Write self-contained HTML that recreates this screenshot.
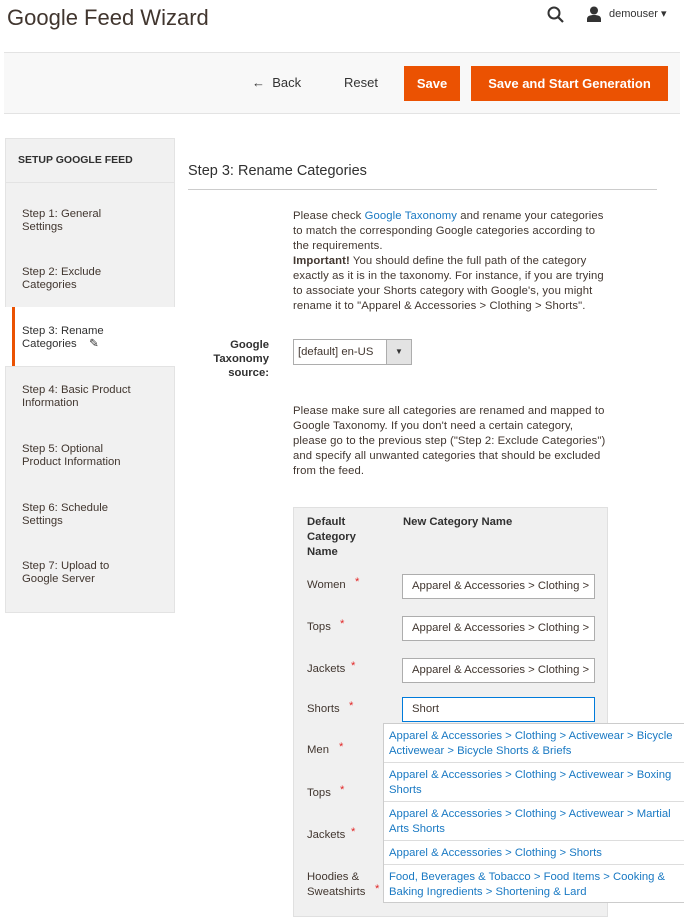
<!DOCTYPE html>
<html><head><meta charset="utf-8"><style>
*{margin:0;padding:0;box-sizing:border-box}
body{width:684px;height:909px;overflow:hidden;background:#fff;font-family:"Liberation Sans",sans-serif;color:#41362f;font-size:11px;position:relative}
.a{position:absolute}
.btn{position:absolute;background:#eb5202;color:#fff;font-weight:bold;font-size:13px;text-align:center;line-height:35px;top:66px;height:35px}
.st{position:absolute;left:22px;font-size:11.3px;line-height:13px;color:#41362f}
.p{position:absolute;left:293px;white-space:nowrap;font-size:11.3px;line-height:15px;color:#41362f;letter-spacing:0.1px}
.lb{position:absolute;left:307px;font-size:11.3px;color:#41362f}
.lb i{color:#e22626;font-style:normal;position:absolute;top:-3px}
.in{position:absolute;left:402px;width:193px;height:25px;border:1px solid #adadad;background:#fff;font-size:11.3px;line-height:23px;padding-left:9px;white-space:nowrap;overflow:hidden}
.dd{position:absolute;left:383px;top:723px;width:301px;height:180px;background:#fff;border:1px solid #ccc;border-right:none}
.di{padding:5px 5px 3px 5px;border-bottom:1px solid #ddd;color:#1979c3;font-size:11.3px;line-height:15px;white-space:nowrap}
</style></head><body>
<div class="a" style="left:7px;top:5px;font-size:22px;color:#41362f">Google Feed Wizard</div>
<svg class="a" style="left:547px;top:6px" width="18" height="18" viewBox="0 0 18 18"><circle cx="7" cy="7" r="5.5" fill="none" stroke="#333" stroke-width="2"/><path d="M11 11l5 5" stroke="#333" stroke-width="2.2"/></svg>
<svg class="a" style="left:587px;top:6px" width="14" height="16" viewBox="0 0 14 16"><circle cx="7" cy="4.5" r="4" fill="#333"/><path d="M0 16v-3c0-3 3-4 7-4s7 1 7 4v3z" fill="#333"/></svg>
<div class="a" style="left:609px;top:7px;font-size:11px;color:#333">demouser ▾</div>
<div class="a" style="left:4px;top:52px;width:676px;height:62px;background:#f8f8f8;border-top:1px solid #e3e3e3;border-bottom:1px solid #e3e3e3"></div>
<div class="a" style="left:252px;top:75px;font-size:13px;color:#333">←&nbsp;&nbsp;Back</div>
<div class="a" style="left:344px;top:75px;font-size:13px;color:#333">Reset</div>
<div class="btn" style="left:404px;width:56px">Save</div>
<div class="btn" style="left:471px;width:197px">Save and Start Generation</div>

<div class="a" style="left:5px;top:138px;width:170px;height:475px;background:#f1f1f1;border:1px solid #e3e3e3"></div>
<div class="a" style="left:5px;top:182px;width:170px;border-top:1px solid #e3e3e3"></div>
<div class="a" style="left:18px;top:154px;font-size:10.5px;font-weight:bold;color:#303030">SETUP GOOGLE FEED</div>
<div class="st" style="top:208px">Step 1: General<br>Settings</div>
<div class="st" style="top:266px">Step 2: Exclude<br>Categories</div>
<div class="a" style="left:5px;top:307px;width:170px;height:59px;background:#fff"></div>
<div class="a" style="left:12px;top:307px;width:3px;height:59px;background:#eb5202"></div>
<div class="st" style="top:325px;color:#303030">Step 3: Rename<br>Categories &nbsp;&nbsp;&nbsp;✎</div>
<div class="a" style="left:5px;top:366px;width:170px;border-top:1px solid #e3e3e3"></div>
<div class="st" style="top:384px">Step 4: Basic Product<br>Information</div>
<div class="st" style="top:443px">Step 5: Optional<br>Product Information</div>
<div class="st" style="top:502px">Step 6: Schedule<br>Settings</div>
<div class="st" style="top:560px">Step 7: Upload to<br>Google Server</div>

<div class="a" style="left:188px;top:163px;font-size:14.5px;color:#303030">Step 3: Rename Categories</div>
<div class="a" style="left:188px;top:189px;width:469px;border-top:1px solid #ccc"></div>
<div class="p" style="top:209px">Please check <span style="color:#1979c3">Google Taxonomy</span> and rename your categories<br>to match the corresponding Google categories according to<br>the requirements.<br><b>Important!</b> You should define the full path of the category<br>exactly as it is in the taxonomy. For instance, if you are trying<br>to associate your Shorts category with Google's, you might<br>rename it to "Apparel &amp; Accessories &gt; Clothing &gt; Shorts".</div>
<div class="a" style="left:190px;top:338px;width:79px;text-align:right;font-weight:bold;font-size:11.3px;line-height:14px;color:#303030">Google Taxonomy source:</div>
<div class="a" style="left:293px;top:339px;width:119px;height:26px;border:1px solid #adadad;background:#fff;font-size:11.3px;line-height:24px;padding-left:4px">[default] en-US</div>
<div class="a" style="left:386px;top:340px;width:25px;height:24px;background:#e3e3e3;border-left:1px solid #adadad;text-align:center;line-height:24px;font-size:8px;color:#333">▼</div>
<div class="p" style="top:404px">Please make sure all categories are renamed and mapped to<br>Google Taxonomy. If you don't need a certain category,<br>please go to the previous step ("Step 2: Exclude Categories")<br>and specify all unwanted categories that should be excluded<br>from the feed.</div>

<div class="a" style="left:293px;top:507px;width:315px;height:410px;background:#f0f0f0;border:1px solid #e0e0e0"></div>
<div class="a" style="left:307px;top:515px;font-weight:bold;font-size:11.3px;line-height:15px;color:#303030">Default<br>Category<br>Name</div>
<div class="a" style="left:403px;top:515px;font-weight:bold;font-size:11.3px;line-height:15px;color:#303030">New Category Name</div>
<div class="lb" style="top:579px">Women <i style="left:48px">*</i></div>
<div class="lb" style="top:621px">Tops <i style="left:33px">*</i></div>
<div class="lb" style="top:663px">Jackets <i style="left:44px">*</i></div>
<div class="lb" style="top:703px">Shorts <i style="left:42px">*</i></div>
<div class="lb" style="top:744px">Men <i style="left:32px">*</i></div>
<div class="lb" style="top:787px">Tops <i style="left:33px">*</i></div>
<div class="lb" style="top:829px">Jackets <i style="left:44px">*</i></div>
<div class="lb" style="top:870px;line-height:15px">Hoodies &amp;<br>Sweatshirts <i style="left:68px;top:12px">*</i></div>
<div class="in" style="top:574px">Apparel &amp; Accessories &gt; Clothing &gt;</div>
<div class="in" style="top:616px">Apparel &amp; Accessories &gt; Clothing &gt;</div>
<div class="in" style="top:658px">Apparel &amp; Accessories &gt; Clothing &gt;</div>
<div class="in" style="top:697px;border-color:#007bdb">Short</div>
<div class="dd">
<div class="di">Apparel &amp; Accessories &gt; Clothing &gt; Activewear &gt; Bicycle<br>Activewear &gt; Bicycle Shorts &amp; Briefs</div>
<div class="di">Apparel &amp; Accessories &gt; Clothing &gt; Activewear &gt; Boxing<br>Shorts</div>
<div class="di">Apparel &amp; Accessories &gt; Clothing &gt; Activewear &gt; Martial<br>Arts Shorts</div>
<div class="di">Apparel &amp; Accessories &gt; Clothing &gt; Shorts</div>
<div class="di" style="border:none">Food, Beverages &amp; Tobacco &gt; Food Items &gt; Cooking &amp;<br>Baking Ingredients &gt; Shortening &amp; Lard</div>
</div>
</body></html>
